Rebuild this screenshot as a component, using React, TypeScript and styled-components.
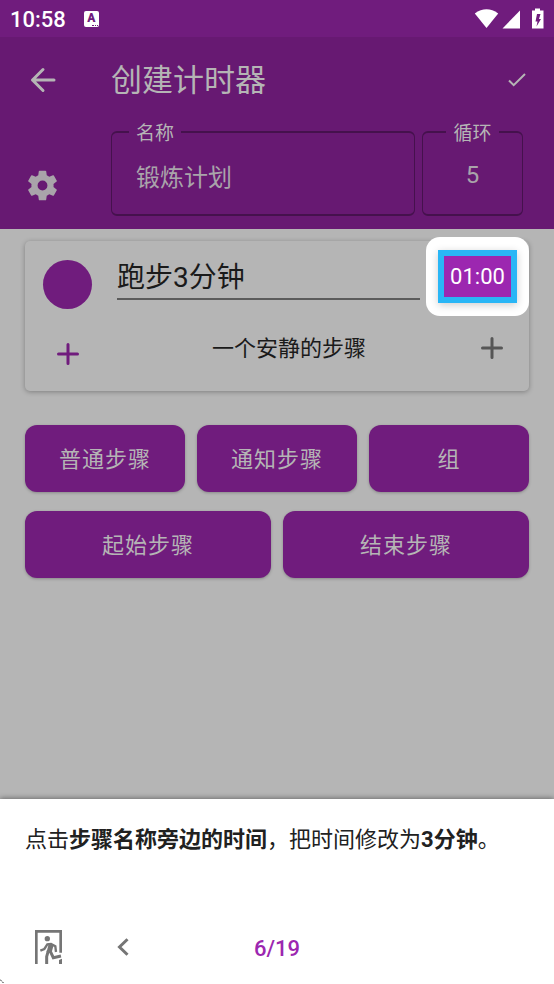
import React from "react";
import styled, { createGlobalStyle } from "styled-components";

const purple = "#701c7d";
const headerPurple = "#671972";
const dimWhite = "#b5b5b5";
const accent = "#9c27b0";

const GlobalStyle = createGlobalStyle`
  *, *::before, *::after { box-sizing: border-box; }
  body { margin: 0; }
  body, button, input {
    font-family: Roboto, "Noto Sans CJK SC", sans-serif;
    font-size: 22px;
  }
  button {
    border: 0;
    padding: 0;
    background: none;
    display: inline-flex;
    align-items: center;
    justify-content: center;
    cursor: pointer;
  }
`;

const Screen = styled.div`
  position: relative;
  min-height: 100vh;
  display: flex;
  flex-direction: column;
  background: ${dimWhite};
`;

const StatusBar = styled.div`
  height: 37px;
  padding: 0 10px;
  display: flex;
  align-items: center;
  justify-content: space-between;
  background: ${purple};
  color: #fff;
  font-weight: 500;
`;

const StatusGroup = styled.div`
  padding-top: 2px;
  display: flex;
  align-items: center;
  gap: 18px;
`;

const AppBadge = styled.span`
  position: relative;
  width: 15px;
  height: 16px;
  margin-bottom: 2px;
  border-radius: 2px;
  background: #fff;
  color: ${purple};
  font-size: 12px;
  line-height: 15px;
  font-weight: 900;
  text-align: center;
  &::after {
    content: "";
    position: absolute;
    right: 1px;
    bottom: 1px;
    width: 6px;
    border-bottom: 1px dotted ${purple};
  }
`;

const Header = styled.header`
  background: ${headerPurple};
  color: ${dimWhite};
  padding-bottom: 13px;
`;

const Toolbar = styled.div`
  height: 81px;
  padding: 4px 24px 0;
  display: grid;
  grid-template-columns: 87px 1fr auto;
  align-items: center;
`;

const Title = styled.h1`
  margin: 0;
  padding-top: 2px;
  font-size: 31px;
  line-height: 40px;
  font-weight: 400;
`;

const IconButton = styled.button<{ $size: number; $color: string }>`
  width: ${(p) => p.$size}px;
  height: ${(p) => p.$size}px;
  color: ${(p) => p.$color};
  flex: none;
`;

const FieldRow = styled.div`
  padding: 0 31px 0 24px;
  display: grid;
  grid-template-columns: 80px 1fr 101px;
  column-gap: 7px;
  align-items: end;
`;

const GearSlot = styled.div`
  height: 49px;
`;

const Field = styled.fieldset<{ $centered?: boolean }>`
  min-width: 0;
  margin: 0;
  padding: 0 ${(p) => (p.$centered ? 8 : 17)}px 10px;
  border: solid #45114d;
  border-width: 2px 1px;
  border-radius: 6px;
  legend {
    padding: 4px 7px 0;
    margin: ${(p) => (p.$centered ? "0 auto" : "0")};
    font-size: 19px;
    line-height: 24px;
  }
  input {
    display: block;
    width: 100%;
    height: 58px;
    padding: 0 7px;
    border: 0;
    outline: 0;
    background: none;
    color: #a9a4aa;
    font-size: 24px;
    text-align: ${(p) => (p.$centered ? "center" : "left")};
  }
`;

const Content = styled.main`
  padding: 12px 25px 24px;
`;

const Card = styled.section`
  height: 150px;
  border-radius: 5px;
  background: ${dimWhite};
  box-shadow: 0 1px 5px rgba(0, 0, 0, 0.3);
`;

const StepRow = styled.div`
  height: 75px;
  padding-left: 18px;
  display: flex;
  align-items: flex-start;
`;

const ColorDot = styled.button`
  width: 49px;
  height: 49px;
  margin: 19px 25px 0 0;
  border-radius: 50%;
  background: ${purple};
  flex: none;
`;

const StepName = styled.input`
  flex: 1;
  min-width: 0;
  height: 48px;
  margin: 11px 6px 0 0;
  padding: 0 0 1px;
  border: 0;
  border-bottom: 2px solid #5b5b5b;
  outline: 0;
  background: none;
  color: #1a1a1a;
  font-size: 28px;
`;

const Spotlight = styled.div`
  margin-top: -4px;
  padding: 13px 12px;
  border-radius: 14px;
  background: #fff;
`;

const TimeButton = styled.button`
  width: 79px;
  height: 53px;
  border: 6px solid #29b6f6;
  background: ${accent};
  color: #fff;
  box-shadow: 0 2px 8px rgba(0, 0, 0, 0.2);
`;

const NoteRow = styled.div`
  padding: 16px 15px 0 21px;
  display: grid;
  grid-template-columns: 62px 1fr 44px;
  justify-items: center;
  align-items: start;
  line-height: 34px;
  color: #1a1a1a;
`;

const AddSlot = styled.div<{ $low?: boolean }>`
  width: 44px;
  display: flex;
  justify-content: center;
  justify-self: start;
  margin-top: ${(p) => (p.$low ? 6 : 0)}px;
`;

const ButtonGrid = styled.div`
  margin-top: 34px;
  display: flex;
  flex-direction: column;
  gap: 19px;
`;

const ButtonRow = styled.div`
  display: flex;
  gap: 12px;
`;

const StepButton = styled.button`
  && {
    flex: 1 1 0;
    height: 67px;
    padding-bottom: 4px;
    border-radius: 12px;
    background: ${purple};
    color: ${dimWhite};
    letter-spacing: 1px;
    box-shadow: 0 1px 3px rgba(0, 0, 0, 0.25);
  }
`;

const GuidePanel = styled.section`
  margin-top: auto;
  background: #fff;
  color: #212121;
  box-shadow: 0 -1px 5px rgba(0, 0, 0, 0.4);
`;

const GuideText = styled.p`
  margin: 0;
  min-height: 112px;
  padding: 25px 25px 0;
  line-height: 32px;
`;

const GuideNav = styled.nav`
  height: 73px;
  padding: 0 25px 2px;
  display: grid;
  grid-template-columns: 1fr auto 1fr;
  align-items: center;
`;

const NavGroup = styled.div`
  display: flex;
  gap: 29px;
`;

const PageCount = styled.span`
  padding-top: 4px;
  color: ${accent};
  font-weight: 500;
`;

const CornerMark = styled.svg`
  position: absolute;
  left: 0;
  bottom: 0;
`;

const Plus = () => (
  <svg width="22" height="22" viewBox="0 0 22 22" stroke="currentColor" strokeWidth="3" strokeLinecap="round" aria-hidden="true">
    <path d="M11 1.5V20.5M1.5 11H20.5" />
  </svg>
);

const stepButtonRows = [
  ["普通步骤", "通知步骤", "组"],
  ["起始步骤", "结束步骤"],
];

export default function App() {
  return (
    <Screen>
      <GlobalStyle />
      <StatusBar>
        <StatusGroup>
          <span>10:58</span>
          <AppBadge>A</AppBadge>
        </StatusGroup>
        <svg width="70" height="22" viewBox="0 0 70 22" fill="#fff" aria-hidden="true">
          <path d="M0.8 5.5Q12.5-2.8 24.2 5.5L12.5 20Z" />
          <path d="M46 2.5V20.5H28.5Z" />
          <path fillRule="evenodd" d="M61 0.5H66V2.5H69.5V20.5H58V2.5H61ZM63 6L61.5 13.5H63.5L62.5 18.5L67 11H65L66.5 6Z" />
        </svg>
      </StatusBar>

      <Header>
        <Toolbar>
          <IconButton $size={37} $color={dimWhite} aria-label="返回">
            <svg width="26" height="26" viewBox="0 0 26 26" fill="none" stroke="currentColor" strokeWidth="3" strokeLinecap="round" strokeLinejoin="round">
              <path d="M24 13H2.5M13 2.5L2.5 13L13 23.5" />
            </svg>
          </IconButton>
          <Title>创建计时器</Title>
          <IconButton $size={26} $color={dimWhite} aria-label="完成">
            <svg width="18" height="14" viewBox="0 0 18 14" fill="none" stroke="currentColor" strokeWidth="2">
              <path d="M1 7.5L5.7 12.2L17 1" />
            </svg>
          </IconButton>
        </Toolbar>
        <FieldRow>
          <GearSlot>
            <IconButton $size={37} $color="#a9a4aa" aria-label="设置">
              <svg width="37" height="37" viewBox="0 0 24 24" fill="currentColor">
                <path d="M19.14 12.94c.04-.3.06-.61.06-.94s-.02-.64-.07-.94l2.03-1.58a.49.49 0 0 0 .12-.61l-1.92-3.32a.49.49 0 0 0-.59-.22l-2.39.96a7 7 0 0 0-1.62-.94l-.36-2.54a.48.48 0 0 0-.48-.41h-3.84a.47.47 0 0 0-.47.41l-.36 2.54c-.59.24-1.13.57-1.62.94l-2.39-.96a.48.48 0 0 0-.59.22L2.74 8.87a.48.48 0 0 0 .12.61l2.03 1.58c-.05.3-.09.63-.09.94s.02.64.07.94l-2.03 1.58a.49.49 0 0 0-.12.61l1.92 3.32c.12.22.37.29.59.22l2.39-.96c.5.38 1.03.7 1.62.94l.36 2.54c.05.24.24.41.48.41h3.84c.24 0 .44-.17.47-.41l.36-2.54a7 7 0 0 0 1.62-.94l2.39.96c.22.08.47 0 .59-.22l1.92-3.32a.48.48 0 0 0-.12-.61zM12 15.2a3.2 3.2 0 1 1 0-6.4 3.2 3.2 0 0 1 0 6.4z" />
              </svg>
            </IconButton>
          </GearSlot>
          <Field>
            <legend><label htmlFor="timer-name">名称</label></legend>
            <input id="timer-name" defaultValue="锻炼计划" />
          </Field>
          <Field $centered>
            <legend><label htmlFor="timer-loops">循环</label></legend>
            <input id="timer-loops" inputMode="numeric" defaultValue="5" />
          </Field>
        </FieldRow>
      </Header>

      <Content>
        <Card>
          <StepRow>
            <ColorDot aria-label="颜色" />
            <StepName aria-label="步骤名称" defaultValue="跑步3分钟" />
            <Spotlight>
              <TimeButton>01:00</TimeButton>
            </Spotlight>
          </StepRow>
          <NoteRow>
            <AddSlot $low>
              <IconButton $size={32} $color={purple} aria-label="添加提醒"><Plus /></IconButton>
            </AddSlot>
            <span>一个安静的步骤</span>
            <AddSlot>
              <IconButton $size={32} $color="#565656" aria-label="添加"><Plus /></IconButton>
            </AddSlot>
          </NoteRow>
        </Card>
        <ButtonGrid>
          {stepButtonRows.map((row) => (
            <ButtonRow key={row[0]}>
              {row.map((label) => <StepButton key={label}>{label}</StepButton>)}
            </ButtonRow>
          ))}
        </ButtonGrid>
      </Content>

      <GuidePanel>
        <GuideText>
          点击<b>步骤名称旁边的时间</b>，把时间修改为<b>3分钟</b>。
        </GuideText>
        <GuideNav>
          <NavGroup>
            <IconButton $size={46} $color="#757575" aria-label="退出">
              <svg width="27" height="34" viewBox="0 0 81 102" fill="none" stroke="currentColor">
                <path strokeWidth="8" d="M4 102V4H77V68" />
                <path fill="currentColor" stroke="none" d="M72 90L81 86V102H72Z" />
                <circle cx="37" cy="26" r="8" fill="currentColor" stroke="none" />
                <path strokeWidth="7" d="M16 62L28 57L37 43L48 42L61 49L63 66" />
                <path strokeWidth="15" d="M49 42L42 68" />
                <path strokeWidth="9" d="M40 62L35 80V102M46 64L55 83L78 78" />
              </svg>
            </IconButton>
            <IconButton $size={46} $color="#757575" aria-label="上一步">
              <svg width="12" height="18" viewBox="0 0 12 18" fill="none" stroke="currentColor" strokeWidth="3">
                <path d="M10.5 1.2L2.5 9L10.5 16.8" />
              </svg>
            </IconButton>
          </NavGroup>
          <PageCount>6/19</PageCount>
        </GuideNav>
      </GuidePanel>
      <CornerMark width="4" height="5" viewBox="0 0 4 5" stroke="#222" strokeDasharray="2 1" aria-hidden="true">
        <path d="M0 0.5L4 4.5" />
      </CornerMark>
    </Screen>
  );
}
